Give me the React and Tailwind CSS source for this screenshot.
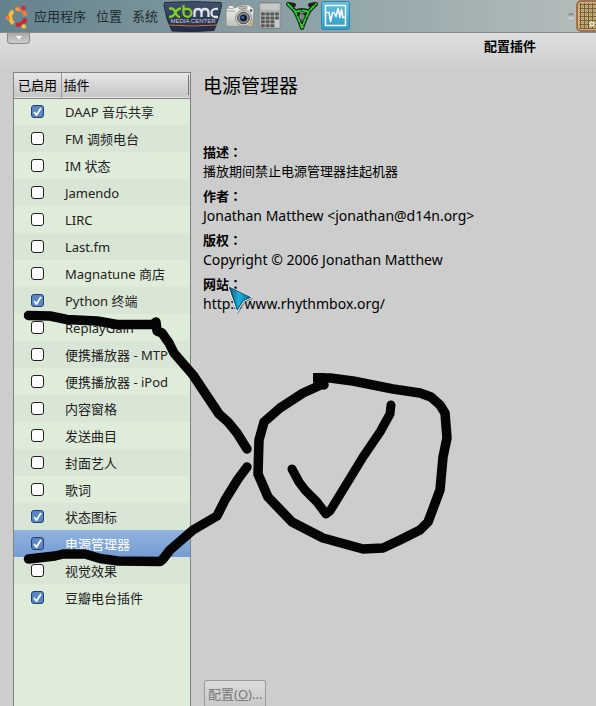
const plugins = [
  { name: "DAAP 音乐共享", enabled: true },
  { name: "FM 调频电台", enabled: false },
  { name: "IM 状态", enabled: false },
  { name: "Jamendo", enabled: false },
  { name: "LIRC", enabled: false },
  { name: "Last.fm", enabled: false },
  { name: "Magnatune 商店", enabled: false },
  { name: "Python 终端", enabled: true },
  { name: "ReplayGain", enabled: false },
  { name: "便携播放器 - MTP", enabled: false },
  { name: "便携播放器 - iPod", enabled: false },
  { name: "内容窗格", enabled: false },
  { name: "发送曲目", enabled: false },
  { name: "封面艺人", enabled: false },
  { name: "歌词", enabled: false },
  { name: "状态图标", enabled: true },
  { name: "电源管理器", enabled: true, selected: true },
  { name: "视觉效果", enabled: false },
  { name: "豆瓣电台插件", enabled: true },
];

const details = [
  { label: "描述", value: "播放期间禁止电源管理器挂起机器" },
  { label: "作者", value: "Jonathan Matthew <jonathan@d14n.org>", latin: true },
  { label: "版权", value: "Copyright © 2006 Jonathan Matthew", latin: true },
  { label: "网站", value: "http://www.rhythmbox.org/", latin: true, link: true },
];

function UbuntuLogo() {
  return (
    <svg width="24" height="26" viewBox="0 0 24 26" fill="none">
      <path d="M10.500 6.300A8 8 0 0 1 20.500 13" stroke="#ef7d3a" strokeWidth="4" />
      <path d="M20.500 15.500A8 8 0 0 1 11 21.500" stroke="#cf2231" strokeWidth="4" />
      <path d="M8 8A8 8 0 0 0 8.500 20.500" stroke="#f8bd35" strokeWidth="4" />
      <path d="M10.500 5.800l4 1.500" stroke="#f9a04e" strokeWidth="2" />
      <circle cx="2.800" cy="14.700" r="2.200" fill="#f07c3e" />
      <circle cx="18.500" cy="5" r="2.700" fill="#c92f3f" stroke="#6d8791" strokeWidth=".8" />
      <circle cx="18.800" cy="23.500" r="2.600" fill="#f9c13c" stroke="#6d8791" strokeWidth=".8" />
    </svg>
  );
}

function XbmcIcon() {
  return (
    <svg width="60" height="32" viewBox="0 0 60 32">
      <defs>
        <linearGradient id="xbmc" x1="0" y1="0" x2="0" y2="1">
          <stop offset="0" stopColor="#43516c" />
          <stop offset="1" stopColor="#202b46" />
        </linearGradient>
      </defs>
      <path
        d="M1.500 2.500Q30 .8 58 2.500Q59 3 58.500 6Q56 20 51 30.500Q30 32.500 9 31Q3 20 1 5Z"
        fill="url(#xbmc)"
        stroke="#222c40"
      />
      <path d="M6 25Q30 27 54 25" stroke="#c96f43" strokeWidth="1" fill="none" />
      <g fill="none" strokeWidth="2.300" strokeLinejoin="round">
        <path
          d="M6 8.500H8.500Q11 8.500 12.500 12.500Q14 17 17 17M18 8.500Q14.500 8.500 12.500 12.500Q10.500 17 6 17M20.500 5V13A4 4 0 1 0 24.500 8.800H20"
          stroke="#82cf27"
        />
        <path
          d="M31.500 17V12.500Q31.500 9 35 9Q38.500 9 38.500 12.500V17M38.500 12.500Q38.500 9 42 9Q45.500 9 45.500 12.500V17M55 8.800H52.500A4 4 0 0 0 52.500 17H55"
          stroke="#dfe4ec"
        />
      </g>
      <text
        x="30"
        y="23"
        fontSize="6"
        fontFamily="Liberation Sans, sans-serif"
        fill="#c5cddb"
        textAnchor="middle"
      >
        MEDIA CENTER
      </text>
    </svg>
  );
}

function CameraIcon() {
  return (
    <svg width="30" height="26" viewBox="0 0 30 26">
      <defs>
        <linearGradient id="cam" x1="0" y1="0" x2="0" y2="1">
          <stop offset="0" stopColor="#f6f6f2" />
          <stop offset="1" stopColor="#bebeb9" />
        </linearGradient>
      </defs>
      <path
        d="M1 7Q1 5 3 5V3Q6 1.500 9 3V4.500L12 4Q14 2 17 2H24Q26 4 28 5Q29 6 29 8L28 22Q28 23.500 26 23.500H3Q1 23.500 1 21Z"
        fill="url(#cam)"
        stroke="#8c8c88"
      />
      <path d="M3 5Q6 6.500 10 4.500M1 8H10" stroke="#a0a09c" fill="none" />
      <rect x="14" y="3.500" width="8" height="2.500" rx="1" fill="#bbb" stroke="#666" strokeWidth=".6" />
      <circle cx="26" cy="7.500" r="1.200" fill="#4a4a48" />
      <circle cx="18.500" cy="15" r="8" fill="#d5d5d0" stroke="#8e8e8a" />
      <circle cx="18.500" cy="15" r="5.800" fill="#8c8e8c" stroke="#3a3c3c" />
      <circle cx="18.500" cy="15" r="3.500" fill="#141c30" />
      <circle cx="17.700" cy="14.500" r="1.500" fill="#2f69bd" />
      <path d="M24.500 20.500h3" stroke="#ef9a31" strokeWidth="2" />
    </svg>
  );
}

function CalculatorIcon() {
  return (
    <svg width="24" height="28" viewBox="0 0 24 28">
      <rect x="1" y=".5" width="22" height="26" rx="2" fill="#aeb0af" stroke="#808483" />
      <rect x="2.500" y="2" width="19" height="6" rx="1" fill="#c6c8c5" />
      {[0, 1, 2, 3].map((row) =>
        [0, 1, 2, 3].map((col) => (
          <rect
            key={`${row}-${col}`}
            x={3 + col * 4.7}
            y={10.5 + row * 3.9}
            width="3.800"
            height="3"
            rx=".8"
            fill={col === 3 && row > 1 ? "#d2d6d6" : "#555958"}
          />
        ))
      )}
      <rect x="17.100" y="19" width="3.800" height="6" rx=".8" fill="#c3cbcd" />
    </svg>
  );
}

function HornIcon() {
  return (
    <svg width="34" height="30" viewBox="0 0 34 30" fill="none">
      <g strokeLinejoin="round" strokeLinecap="round">
        <path
          d="M3 3L6 6L10 10L14 19L17 27L20 19L24 10L28 6L31 3M4 3L9 4M30 3L25 4M10 11Q17 7 24 11"
          stroke="#1b201b"
          strokeWidth="4"
        />
        <path d="M13 13Q13 19 17 22Q21 19 21 13Z" fill="#59635d" stroke="#1b201b" strokeWidth="2" />
        <path
          d="M3 3L6 6L10 10L14 19L17 27L20 19L24 10L28 6L31 3M10 11Q17 8 24 11"
          stroke="#20d62c"
          strokeWidth="1.800"
          strokeDasharray="6 2"
        />
        <path d="M16 13h2v4h-2z" stroke="#a0aaa4" strokeWidth="1" />
        <path d="M16 23l2 3" stroke="#c9b52d" strokeWidth="1" />
      </g>
    </svg>
  );
}

function MonitorIcon() {
  return (
    <svg width="30" height="30" viewBox="0 0 30 30" fill="none">
      <defs>
        <linearGradient id="mon" x1="0" y1="0" x2="0" y2="1">
          <stop offset="0" stopColor="#62bfe0" />
          <stop offset="1" stopColor="#2d9cca" />
        </linearGradient>
      </defs>
      <rect x=".5" y=".5" width="28" height="28" rx="2" fill="url(#mon)" stroke="#3688aa" />
      <rect x="4.500" y="4.500" width="20" height="20" stroke="#fff" strokeWidth="1.500" />
      <path
        d="M5 11.500h3l1.500 9l2-9h1.500l2 4l2-8l2 9l1.500-8l1.500 8h3"
        stroke="#fff"
        strokeWidth="1.500"
        strokeLinejoin="round"
      />
    </svg>
  );
}

function WickerIcon() {
  return (
    <svg width="20" height="32" viewBox="0 0 20 32">
      <defs>
        <pattern id="weave" width="4" height="4" patternUnits="userSpaceOnUse">
          <rect width="4" height="4" fill="#d6b779" />
          <path d="M0 .5H4M.5 0V4" stroke="#665b3c" strokeWidth="1" />
          <path d="M0 2.500H4M2.500 0V4" stroke="#a08a58" strokeWidth=".6" />
        </pattern>
      </defs>
      <rect x="1" y="1" width="30" height="30" rx="4" fill="#d8ae73" stroke="#8b5d3c" strokeWidth="1.500" />
      <rect x="3.500" y="3" width="30" height="26" fill="url(#weave)" />
      <circle cx="16" cy="24" r="2.500" fill="#f6f2e6" />
      <circle cx="16" cy="24" r="1" fill="#8a6f42" />
    </svg>
  );
}

function TopPanel() {
  return (
    <header className="flex h-[33px] shrink-0 items-center justify-between overflow-hidden border-b border-[#858b8c] bg-linear-to-r from-[#64828d] via-[#8ba1a5] to-[#b6bdbc]">
      <div className="flex items-center">
        <nav className="flex items-center gap-[10px] pr-[5px] pl-[5px] text-[#1f2a2e]">
          <a href="#apps" className="flex items-center gap-[5px]">
            <UbuntuLogo />
            应用程序
          </a>
          <a href="#places">位置</a>
          <a href="#system">系统</a>
        </nav>
        <div className="flex items-center">
          <XbmcIcon />
          <div className="flex items-center gap-[3px] px-[2px]">
            <CameraIcon />
            <CalculatorIcon />
            <HornIcon />
          </div>
          <MonitorIcon />
        </div>
      </div>
      <div className="flex items-center gap-[2px]">
        <span className="h-[6px] w-[6px] rounded-full bg-linear-to-b from-[#767d7d] to-[#e0e3e3]" />
        <WickerIcon />
      </div>
    </header>
  );
}

function TitleBar() {
  return (
    <div className="flex h-[39px] shrink-0 items-start justify-between bg-linear-to-b from-[#dedede] to-[#cdcdcd] pr-[60px] pl-[7px]">
      <button
        type="button"
        aria-label="菜单"
        className="flex h-[11px] w-[23px] items-center justify-center rounded-b border border-t-0 border-[#8a8a8a] bg-linear-to-b from-[#a8a8a8] to-[#cecece]"
      >
        <svg className="shrink-0" width="8" height="6" viewBox="0 0 8 6">
          <path d="M0 .5h8L4 5.500z" fill="#fff" stroke="#8f8f8f" strokeWidth=".5" />
        </svg>
      </button>
      <h1 className="pt-[3px] font-bold">配置插件</h1>
    </div>
  );
}

function PluginRow({ plugin, index }) {
  const id = `plugin-${index}`;
  let bg = index % 2 ? "bg-[#d9e6d6]" : "bg-[#e0ecda]";
  if (plugin.selected) bg = "bg-linear-to-b from-[#91b3df] to-[#759cd2] text-white";
  return (
    <tr className={`h-[27px] ${bg}`}>
      <td className="p-0">
        <span className="grid w-[47px] place-items-center">
          <input
            id={id}
            type="checkbox"
            defaultChecked={plugin.enabled}
            className="peer col-start-1 row-start-1 h-[13px] w-[13px] appearance-none rounded-[3px] border border-[#222] bg-white checked:border-[#213f6f] checked:bg-[#5b88c5]"
          />
          <svg
            className="pointer-events-none invisible col-start-1 row-start-1 peer-checked:visible"
            width="11"
            height="11"
            viewBox="0 0 11 11"
            fill="none"
          >
            <path d="M2 6l2.500 3L9 2" stroke="#fff" strokeWidth="1.800" />
          </svg>
        </span>
      </td>
      <td className="p-0 pl-1 whitespace-nowrap">
        <label htmlFor={id}>{plugin.name}</label>
      </td>
    </tr>
  );
}

function PluginList() {
  return (
    <section className="w-[178px] shrink-0 overflow-hidden border border-b-0 border-[#828282] bg-[#e0ecda] text-[#222]">
      <table className="w-full border-collapse">
        <thead>
          <tr className="h-[25px] border-b border-[#828282] bg-linear-to-b from-[#e6e6e6] to-[#c6c6c6] text-left text-black">
            <th className="w-[47px] border-r border-[#999] p-0 pl-1 font-normal whitespace-nowrap">已启用</th>
            <th className="p-0 pr-px pl-[2px] font-normal">
              <span className="block border-r border-[#777]">插件</span>
            </th>
          </tr>
        </thead>
        <tbody>
          {plugins.map((plugin, index) => (
            <PluginRow key={plugin.name} plugin={plugin} index={index} />
          ))}
        </tbody>
      </table>
    </section>
  );
}

function PluginDetails() {
  return (
    <section className="flex min-w-0 flex-1 flex-col items-start pl-3">
      <h2 className="text-[19px] leading-7">电源管理器</h2>
      <dl className="mt-[42px] flex flex-col gap-[5px] leading-[19px]">
        {details.map((item) => (
          <div key={item.label}>
            <dt className="font-bold">
              {item.label}
              <span className="font-['Noto_Sans_CJK_TC',sans-serif]" lang="zh-TW">：</span>
            </dt>
            <dd className={item.latin ? "text-[14px] leading-[19px]" : undefined}>
              {item.link ? <a href={item.value}>{item.value}</a> : item.value}
            </dd>
          </div>
        ))}
      </dl>
      <button
        type="button"
        className="mt-auto ml-px h-[26px] rounded-t-[3px] border border-b-0 border-[#9a9a9a] bg-linear-to-b from-[#dcdcdc] to-[#c9c9c9] px-[3px] text-[#777]"
      >
        配置(<u>O</u>)...
      </button>
    </section>
  );
}

// marker strokes drawn over the window
function Scribble() {
  return (
    <svg
      className="pointer-events-none absolute top-0 left-0"
      width="596"
      height="706"
      viewBox="0 0 596 706"
      fill="none"
      stroke="#050505"
      strokeLinejoin="round"
      strokeLinecap="round"
    >
      <path
        strokeWidth="9.500"
        d="M28.500 315.500L50 316L67 319.500L97 321L117 324.500L153 324.500L156 322L157 331L162 333L169 343L174 353L193 375L213 405L219 414L228 422L237 433L247 449"
      />
      <path
        strokeWidth="9.500"
        d="M28.500 559L55 556L63 554L85 554L100 558.500L118 561L160 561.500L163 559L170 550L193 530L217 516L225 500L238 479L247 467"
      />
      <path
        strokeWidth="9.500"
        d="M323 384L303 393L280 408L264 422L259 440L258 474L268 497L292 522L323 538L363 549L383 548L400 540L420 530L428 522L440 490L443 457L447 438L445 413L440 405L431 397L420 393L393 389L353 381L330 378L318 378L324 385"
      />
      <path d="M313 373h12v15h-8l-4-6z" fill="#050505" stroke="none" />
      <path strokeWidth="9" d="M292 469L299 482L305 490L317 502L326 514L330 511L363 457L380 432L390 414L391 405" />
    </svg>
  );
}

function Cursor() {
  return (
    <svg
      className="pointer-events-none absolute top-[284px] left-[226px]"
      width="30"
      height="32"
      viewBox="0 0 30 32"
    >
      <defs>
        <linearGradient id="cursor" x1="0" y1="0" x2="1" y2="0">
          <stop offset="0" stopColor="#12485e" />
          <stop offset=".45" stopColor="#1fb0e2" />
          <stop offset="1" stopColor="#0c6488" />
        </linearGradient>
      </defs>
      <path d="M3 3.500L27.500 15L19 18.500L12 30Z" fill="#555" opacity=".5" />
      <path d="M2 2L26 13.500L18 17L11 28Z" fill="url(#cursor)" stroke="#e9eef0" strokeWidth="1" />
      <path d="M3.500 3.300L24.500 13.500L17 16.500L11.300 25.500Z" fill="none" stroke="#174e68" strokeWidth="1" />
    </svg>
  );
}

export default function App() {
  return (
    <div
      lang="zh-CN"
      className="relative flex h-screen flex-col overflow-hidden bg-[#cdcdcd] font-['Noto_Sans','Noto_Sans_CJK_SC',sans-serif] text-[13px] leading-5 text-black"
    >
      <TopPanel />
      <TitleBar />
      <main className="flex min-h-0 flex-1 pl-[13px]">
        <PluginList />
        <PluginDetails />
      </main>
      <Cursor />
      <Scribble />
    </div>
  );
}
